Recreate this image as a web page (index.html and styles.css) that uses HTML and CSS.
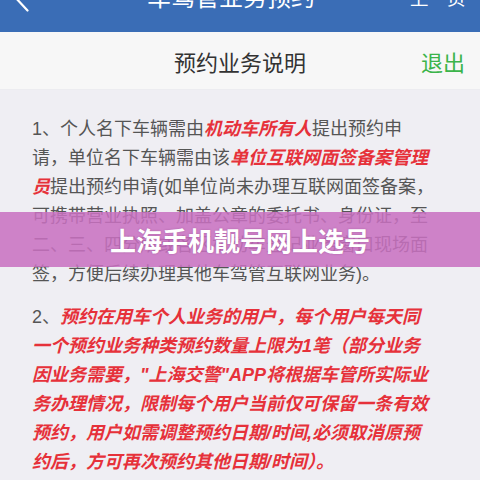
FILE: index.html
```html
<!DOCTYPE html>
<html lang="zh-CN">
<head>
<meta charset="utf-8">
<title>预约业务说明</title>
<link rel="stylesheet" href="styles.css">
</head>
<body>
<div class="page">
  <header class="topbar">
    <svg class="back" width="40" height="32" viewBox="0 0 40 32"><path d="M14 -4 L27.5 10.5" stroke="#fff" stroke-width="2.2" fill="none" stroke-linecap="round"/></svg>
    <div class="top-title">车驾管业务预约</div>
    <div class="top-right">上一页</div>
  </header>
  <div class="subbar">
    <div class="sub-title">预约业务说明</div>
    <div class="sub-exit">退出</div>
  </div>
  <main class="content">
    <p class="para">1、个人名下车辆需由<em class="hl">机动车所有人</em>提出预约申请，单位名下车辆需由该<em class="hl">单位互联网面签备案管理员</em>提出预约申请(如单位尚未办理互联网面签备案，可携带营业执照、加盖公章的委托书、身份证，至二、三、四分所或各区机动车登记业务窗口现场面签，方便后续办理其他车驾管互联网业务)。</p>
    <p class="para">2、<em class="hl">预约在用车个人业务的用户，每个用户每天同一个预约业务种类预约数量上限为1笔（部分业务因业务需要，"上海交警"APP将根据车管所实际业<br>务办理情况，限制每个用户当前仅可保留一条有效预约，用户如需调整预约日期/时间,必须取消原预约后，方可再次预约其他日期/时间）。</em></p>
  </main>
  <div class="banner">上海手机靓号网上选号</div>
</div>
</body>
</html>
```

FILE: styles.css
```css
html, body {
  margin: 0;
  padding: 0;
}
body {
  width: 480px;
  height: 480px;
  overflow: hidden;
  background: #efeef3;
  font-family: "Noto Sans CJK SC", "Noto Sans", sans-serif;
}
.page {
  position: relative;
  width: 480px;
  height: 480px;
  overflow: hidden;
}
.topbar {
  height: 32px;
  background: #3a6db6;
  display: flex;
  align-items: flex-start;
  overflow: hidden;
  color: #fff;
  position: relative;
}
.back {
  flex: none;
  display: block;
}
.top-title {
  flex: 1;
  text-align: center;
  font-size: 24px;
  line-height: 24px;
  margin-top: -16px;
  padding-left: 12px;
}
.top-right {
  flex: none;
  width: 70px;
  font-size: 18.5px;
  line-height: 19px;
  margin-top: -12px;
}
.subbar {
  height: 58px;
  background: #f7f7f7;
  display: flex;
  align-items: center;
  justify-content: center;
  position: relative;
  border-bottom: 1px solid #ececf0;
  box-sizing: border-box;
}
.sub-title {
  font-size: 22px;
  color: #333;
}
.sub-exit {
  position: absolute;
  right: 15px;
  top: 50%;
  transform: translateY(-50%);
  font-size: 22px;
  color: #3bb44a;
}
.content {
  padding: 25px 44px 0 32px;
  color: #555;
  font-family: "Liberation Sans", "Noto Sans CJK SC", sans-serif;
}
.para {
  margin: 0 0 14px 0;
  font-size: 18px;
  line-height: 29px;
}
.hl {
  color: #e6313a;
  font-weight: bold;
  font-style: italic;
}
.banner {
  position: absolute;
  left: 0;
  right: 0;
  top: 212px;
  height: 55px;
  background: rgba(200, 112, 192, 0.86);
  color: #fff;
  font-weight: bold;
  font-size: 26px;
  display: flex;
  align-items: center;
  justify-content: center;
  text-shadow: 0 0 2px rgba(120, 40, 110, 0.4);
}
```
